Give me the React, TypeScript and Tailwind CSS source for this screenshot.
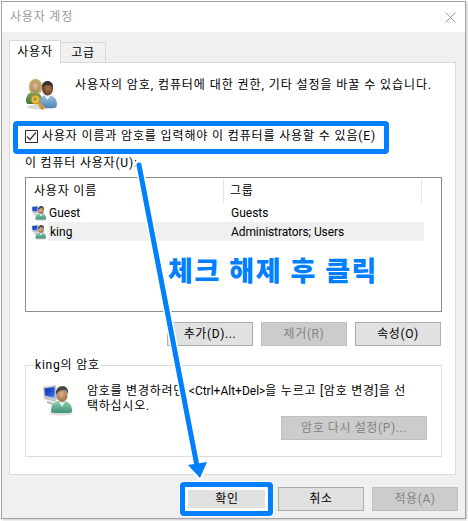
function UsersKeyIcon() {
  return (
    <svg width="34" height="34" viewBox="0 0 34 34" className="shrink-0">
      <defs>
        <radialGradient id="ukFaceA" cx="0.5" cy="0.4" r="0.6">
          <stop offset="0" stopColor="#e3c19b" />
          <stop offset="1" stopColor="#a98258" />
        </radialGradient>
        <radialGradient id="ukFaceB" cx="0.55" cy="0.45" r="0.6">
          <stop offset="0" stopColor="#a97548" />
          <stop offset="1" stopColor="#5d3a22" />
        </radialGradient>
        <linearGradient id="ukBlue" x1="0" y1="0" x2="0" y2="1">
          <stop offset="0" stopColor="#9cc3e4" />
          <stop offset="1" stopColor="#4f86b5" />
        </linearGradient>
        <linearGradient id="ukGreen" x1="0" y1="0" x2="0" y2="1">
          <stop offset="0" stopColor="#7da85f" />
          <stop offset="1" stopColor="#3f7a3c" />
        </linearGradient>
      </defs>
      <ellipse cx="17" cy="29" rx="15" ry="2.5" fill="#d8d8d8" />
      <path d="M1 23c0-6 3-9 8-9s8 3 8 9v3H3c-1 0-2-1-2-3z" fill="url(#ukGreen)" />
      <path d="M4 9c0-5 3-8 6.500-8S17 4 17 9c0 3-1 5-2 6H6C5 14 4 12 4 9z" fill="#b9ab62" />
      <ellipse cx="10.500" cy="9" rx="4.500" ry="5.500" fill="url(#ukFaceA)" />
      <path d="M14 27c0-7 3-10 8-10s10 3 10 9c0 2-1 4-3 4H16c-1 0-2-1-2-3z" fill="url(#ukBlue)" />
      <path d="M19 17l3.500 5 3.500-5z" fill="#eef3f7" />
      <ellipse cx="22.500" cy="11" rx="5.500" ry="6.500" fill="url(#ukFaceB)" />
      <path d="M17 10c-.5-5 2.500-7 5.500-7s6 2 5.500 7c-1-2-2-3-5.500-3S18 8 17 10z" fill="#36322f" />
      <path d="M13 23l7 6.500-2 2-7-6.500z" fill="#e0a02c" />
      <path d="M17 29l-1.500 1.500 1.500 1.500 1.500-1.500z" fill="#c98518" />
      <circle cx="10.500" cy="21.500" r="4.500" fill="#eab93e" stroke="#b9851d" strokeWidth="1" />
      <circle cx="10" cy="21" r="1.700" fill="#7f9f4c" />
    </svg>
  )
}

function UserMonitorIcon({ size }: { size: number }) {
  return (
    <svg width={size} height={size} viewBox="0 0 32 32" className="shrink-0">
      <defs>
        <linearGradient id="umScreen" x1="0" y1="0" x2="1" y2="1">
          <stop offset="0" stopColor="#0c2fb0" />
          <stop offset="0.7" stopColor="#2a5fe0" />
          <stop offset="1" stopColor="#8fb2ee" />
        </linearGradient>
        <linearGradient id="umBody" x1="0" y1="0" x2="0" y2="1">
          <stop offset="0" stopColor="#8fcdb0" />
          <stop offset="1" stopColor="#3f9276" />
        </linearGradient>
        <radialGradient id="umFace" cx="0.45" cy="0.4" r="0.65">
          <stop offset="0" stopColor="#e2b48b" />
          <stop offset="1" stopColor="#96643c" />
        </radialGradient>
      </defs>
      <ellipse cx="19" cy="29" rx="12" ry="2.500" fill="#dcdcdc" />
      <path d="M1 3l13-2 1 14-2 3-11-3z" fill="#c3c7cc" />
      <path d="M2.500 4.500l10-1.500.5 11-10-2.500z" fill="url(#umScreen)" />
      <path d="M5 17l7 2-1 2-6-2z" fill="#b5b9bd" />
      <path d="M9 27c0-6 3-9 7-10h7c4 1 7 4 7 10 0 1-1 2-3 2H12c-2 0-3-1-3-2z" fill="url(#umBody)" />
      <path d="M16.500 17l3.500 6 3.500-6z" fill="#e6f3ec" />
      <ellipse cx="20" cy="11.500" rx="5.500" ry="6.500" fill="url(#umFace)" />
      <path d="M14 11c-1-6 3-9 6.500-9s6.500 3 5.500 8c-1-2-2-4-4-4-3 0-6 1-8 5z" fill="#4a4a48" />
    </svg>
  )
}

function DialogButton({ label, disabled, className }: { label: string; disabled?: boolean; className: string }) {
  return (
    <button
      disabled={disabled}
      className={`h-6 border text-xs leading-none tracking-[0.6px] ${
        disabled ? 'border-[#bfbfbf] bg-[#cccccc] text-[#838383]' : 'border-[#adadad] bg-[#e1e1e1] text-black'
      } ${className}`}
    >
      {label}
    </button>
  )
}

export default function App() {
  return (
    <div className="relative h-[521px] w-[468px] overflow-hidden bg-white font-['Roboto','Noto_Sans_CJK_KR',sans-serif] text-xs tracking-[0.8px] text-black">
      {/* Window */}
      <div className="ml-px mt-px flex h-[518px] w-[465px] flex-col border border-[#a3a3a3] bg-[#f0f0f0] shadow-[1px_1px_2px_#c8c8c8]">
        {/* Title bar */}
        <div className="flex h-[30px] shrink-0 items-center justify-between bg-white pl-2 pr-[9px]">
          <span className="text-[#9a9a9a]">사용자 계정</span>
          <svg width="11" height="11" viewBox="0 0 11 11">
            <path d="M.5.5l10 10M10.500.5l-10 10" stroke="#999" strokeWidth="1" />
          </svg>
        </div>

        <div className="pl-[7px] pt-2">
          {/* Tabs */}
          <div className="relative z-10 flex h-[23px] items-end">
            <div className="flex h-[23px] w-[52px] items-center justify-center border border-b-0 border-[#d9d9d9] bg-white pb-px">
              사용자
            </div>
            <div className="mb-px flex h-5 w-[45px] items-center justify-center border border-b-0 border-l-0 border-[#d9d9d9] bg-[#f0f0f0]">
              고급
            </div>
          </div>

          {/* Panel */}
          <div className="-mt-px flex h-[413px] w-[447px] flex-col border border-[#d9d9d9] bg-white pl-[15px] pr-[13px]">
            <div className="mt-[15px] flex h-8 items-start">
              <UsersKeyIcon />
              <p className="ml-[16px] mt-[-1px] whitespace-nowrap leading-4 tracking-[0.93px]">
                사용자의 암호, 컴퓨터에 대한 권한, 기타 설정을 바꿀 수 있습니다.
              </p>
            </div>

            <label className="mt-[18px] flex h-4 items-center">
              <span className="flex h-[13px] w-[13px] shrink-0 items-center justify-center border border-[#333] bg-white">
                <svg width="11" height="11" viewBox="0 0 11 11">
                  <path d="M1 5.500l3 3 6-7" fill="none" stroke="#333" strokeWidth="1.200" />
                </svg>
              </span>
              <span className="ml-1 whitespace-nowrap tracking-[0.86px]">사용자 이름과 암호를 입력해야 이 컴퓨터를 사용할 수 있음(E)</span>
            </label>

            <p className="mt-[11px] h-4 leading-4">이 컴퓨터 사용자(U):</p>

            {/* User list */}
            <div className="mt-1.5 h-[135px] border border-[#8c8c8c] bg-white">
              <div className="flex h-[25px] items-stretch pt-px">
                <div className="flex w-[198px] items-center border-r border-[#e5e5e5] pl-2">사용자 이름</div>
                <div className="flex w-[198px] items-center border-r border-[#e5e5e5] pl-1.5">그룹</div>
              </div>
              <div className="flex h-[19px] items-center pl-[5px] tracking-normal">
                <UserMonitorIcon size={16} />
                <span className="ml-[2px] w-[182px]">Guest</span>
                <span>Guests</span>
              </div>
              <div className="flex h-[19px] items-center pl-[5px] tracking-normal">
                <UserMonitorIcon size={16} />
                <div className="ml-[1px] flex h-[19px] w-[376px] items-center bg-[#f0f0f0] pl-px">
                  <span className="ml-px w-[181px]">king</span>
                  <span className="tracking-[-0.1px]">Administrators; Users</span>
                </div>
              </div>
            </div>

            <div className="mt-2.5 flex justify-end gap-2 pr-px">
              <DialogButton label="추가(D)..." className="w-[86px]" />
              <DialogButton label="제거(R)" disabled className="w-[86px]" />
              <DialogButton label="속성(O)" className="w-[86px]" />
            </div>

            {/* Password group */}
            <fieldset className="mt-[11px] h-[100px] border border-[#dcdcdc] pl-4 pr-[14px]">
              <legend className="-ml-2 px-px leading-4">king의 암호</legend>
              <div className="mt-[11px] flex items-start">
                <UserMonitorIcon size={32} />
                <p className="ml-[13px] whitespace-nowrap leading-[15px] tracking-[0.75px]">
                  암호를 변경하려면 <span className="tracking-normal">&lt;Ctrl+Alt+Del&gt;</span>을 누르고 [암호 변경]을 선
                  <br />
                  택하십시오.
                </p>
              </div>
              <div className="flex justify-end">
                <DialogButton label="암호 다시 설정(P)..." disabled className="w-[146px]" />
              </div>
            </fieldset>
          </div>

          {/* Footer */}
          <div className="mt-3 flex justify-end gap-2 pr-[7px]">
            <DialogButton label="확인" className="w-[86px]" />
            <DialogButton label="취소" className="w-[86px]" />
            <DialogButton label="적용(A)" disabled className="w-[86px]" />
          </div>
        </div>
      </div>

      {/* Annotations drawn over the screenshot */}
      <div className="absolute left-[13px] top-[121px] h-[33px] w-[376px] rounded-sm border-[5px] border-[#0080ff]" />
      <div className="absolute left-[179px] top-[481px] h-9 w-[95px] rounded-sm border border-white">
        <div className="h-full w-full rounded-sm border-[5px] border-[#0080ff]">
          <div className="h-full w-full border-[3px] border-white" />
        </div>
      </div>
      <svg className="absolute left-0 top-0" width="468" height="521" viewBox="0 0 468 521">
        <path d="M139 165L197 466" stroke="#fff" strokeWidth="8" />
        <path d="M187 464L200 480 208 461z" fill="#fff" stroke="#fff" strokeWidth="2" />
        <path d="M139 165L197 466" stroke="#0080ff" strokeWidth="5" strokeLinecap="round" />
        <path d="M188 465L200 478 207 462z" fill="#0080ff" />
      </svg>
      <div className="absolute left-[168px] top-[252px] whitespace-nowrap text-[27px] font-black leading-10 tracking-[1.6px] text-[#0080ff]">
        체크 해제 후 클릭
      </div>
    </div>
  )
}
